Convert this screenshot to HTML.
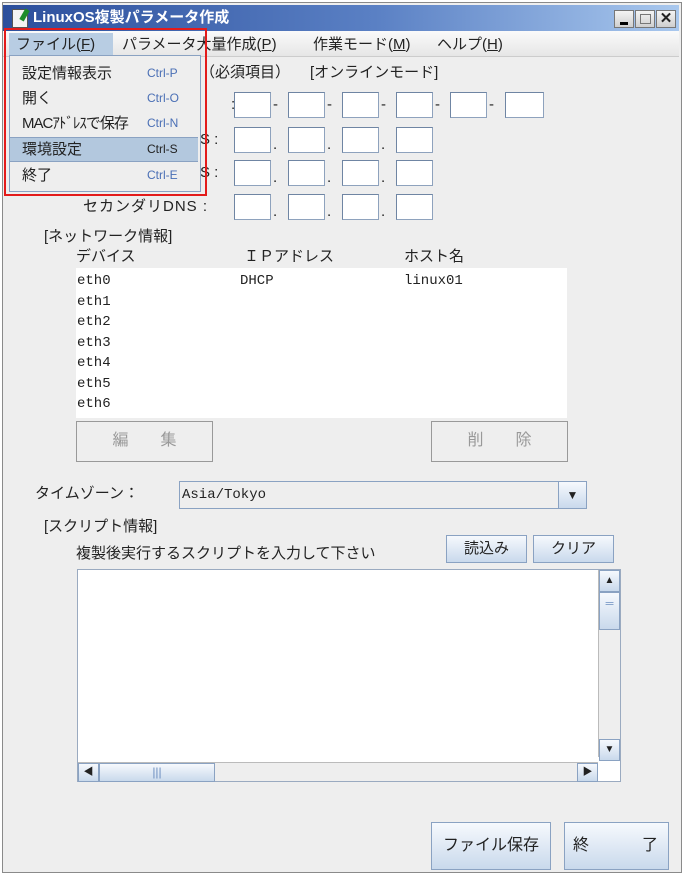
<!DOCTYPE html>
<html><head><meta charset="utf-8"><style>
*{box-sizing:border-box;margin:0;padding:0}
body{width:687px;height:876px;background:#fff;font-family:"Liberation Sans","Noto Sans CJK JP",sans-serif;font-size:15px;color:#222;position:relative;overflow:hidden}
.a{position:absolute;white-space:nowrap}
.win{position:absolute;left:2px;top:2px;width:680px;height:871px;background:#eeeeee;border:1px solid #8a8a8a}
.title{position:absolute;left:3px;top:5px;width:676px;height:26px;background:linear-gradient(90deg,#2c4f9c 0%,#5a80c4 55%,#a9c8ee 100%)}
.menu{position:absolute;left:3px;top:31px;width:676px;height:26px;background:linear-gradient(#fafafa,#e6e6e6);border-bottom:1px solid #ccc}
.tb{position:absolute;width:20px;height:18px;background:linear-gradient(#f4f4f4,#cfcfcf);border:1px solid #777;top:10px}
.box{position:absolute;width:37px;height:26px;background:#fff;border:1px solid #8ea2bd;border-left-color:#6f85a3;border-top-color:#6f85a3}
.btn{position:absolute;background:linear-gradient(#f6f9fd,#c9d9ec);border:1px solid #8aa2c2;text-align:center}
.dbtn{position:absolute;background:#eee;border:1px solid #999;color:#999;text-align:center;font-size:16px;line-height:38px}
.mi{position:absolute;left:10px;width:188px;height:25px;font-size:15px;line-height:25px;padding-left:12px}
.mi span{position:absolute;left:137px;font-size:12px;color:#4a6fb5}
.mono{font-family:"Liberation Mono",monospace;font-size:14px}
</style></head><body>
<div class="win"></div>
<div class="title"></div>
<div class="a" style="left:12px;top:9px;width:16px;height:19px;background:#f3f3f3;border:1px solid #555"></div>
<div class="a" style="left:22px;top:9px;width:5px;height:12px;background:#1c8d2a;transform:rotate(30deg)"></div>
<div class="a" style="left:33px;top:7px;color:#fff;font-weight:bold;font-size:15px;line-height:22px">LinuxOS複製パラメータ作成</div>
<div class="tb" style="left:614px"><div class="a" style="left:5px;top:11px;width:8px;height:3px;background:#000"></div></div>
<div class="tb" style="left:635px"><div class="a" style="left:4px;top:3px;width:11px;height:10px;border:1px solid #777"></div></div>
<div class="tb" style="left:656px;font-weight:bold;text-align:center;line-height:16px;font-size:15px">✕</div>
<div class="menu"></div>
<div class="a" style="left:9px;top:33px;width:104px;height:23px;background:#b8cde3"></div>
<div class="a" style="left:16px;top:34px;line-height:22px">ファイル(<u>F</u>)</div>
<div class="a" style="left:122px;top:34px;line-height:22px">パラメータ大量作成(<u>P</u>)</div>
<div class="a" style="left:313px;top:34px;line-height:22px">作業モード(<u>M</u>)</div>
<div class="a" style="left:437px;top:34px;line-height:22px">ヘルプ(<u>H</u>)</div>

<div class="a" style="left:200px;top:62px;line-height:22px">（必須項目）</div>
<div class="a" style="left:310px;top:62px;line-height:22px">[オンラインモード]</div>

<div class="a" style="left:231px;top:92px;line-height:26px">:</div>
<div class="box" style="left:234px;top:92px"></div><div class="a" style="left:273px;top:96px">-</div>
<div class="box" style="left:288px;top:92px"></div><div class="a" style="left:327px;top:96px">-</div>
<div class="box" style="left:342px;top:92px"></div><div class="a" style="left:381px;top:96px">-</div>
<div class="box" style="left:396px;top:92px"></div><div class="a" style="left:435px;top:96px">-</div>
<div class="box" style="left:450px;top:92px"></div><div class="a" style="left:489px;top:96px">-</div>
<div class="box" style="left:505px;top:92px;width:39px"></div>

<div class="a" style="left:200px;top:127px;line-height:26px">S :</div>
<div class="box" style="left:234px;top:127px"></div><div class="box" style="left:288px;top:127px"></div><div class="box" style="left:342px;top:127px"></div><div class="box" style="left:396px;top:127px"></div>
<div class="a" style="left:273px;top:136px">.</div><div class="a" style="left:327px;top:136px">.</div><div class="a" style="left:381px;top:136px">.</div>
<div class="a" style="left:200px;top:160px;line-height:26px">S :</div>
<div class="box" style="left:234px;top:160px"></div><div class="box" style="left:288px;top:160px"></div><div class="box" style="left:342px;top:160px"></div><div class="box" style="left:396px;top:160px"></div>
<div class="a" style="left:273px;top:169px">.</div><div class="a" style="left:327px;top:169px">.</div><div class="a" style="left:381px;top:169px">.</div>
<div class="a" style="left:83px;top:194px;line-height:26px;letter-spacing:1px">セカンダリDNS :</div>
<div class="box" style="left:234px;top:194px"></div><div class="box" style="left:288px;top:194px"></div><div class="box" style="left:342px;top:194px"></div><div class="box" style="left:396px;top:194px"></div>
<div class="a" style="left:273px;top:203px">.</div><div class="a" style="left:327px;top:203px">.</div><div class="a" style="left:381px;top:203px">.</div>

<div class="a" style="left:44px;top:226px;line-height:22px">[ネットワーク情報]</div>
<div class="a" style="left:76px;top:246px;line-height:22px">デバイス</div>
<div class="a" style="left:244px;top:246px;line-height:22px">ＩＰアドレス</div>
<div class="a" style="left:404px;top:246px;line-height:22px">ホスト名</div>
<div class="a" style="left:76px;top:268px;width:491px;height:150px;background:#fff"></div>
<div class="a mono" style="left:77px;top:271px;line-height:20.5px">eth0<br>eth1<br>eth2<br>eth3<br>eth4<br>eth5<br>eth6</div>
<div class="a mono" style="left:240px;top:271px;line-height:20.5px">DHCP</div>
<div class="a mono" style="left:404px;top:271px;line-height:20.5px">linux01</div>
<div class="dbtn" style="left:76px;top:421px;width:137px;height:41px">編　　集</div>
<div class="dbtn" style="left:431px;top:421px;width:137px;height:41px">削　　除</div>

<div class="a" style="left:35px;top:483px;line-height:22px">タイムゾーン：</div>
<div class="a" style="left:179px;top:481px;width:408px;height:28px;background:#eee;border:1px solid #8aa2c2"></div>
<div class="a mono" style="left:182px;top:485px;line-height:20px">Asia/Tokyo</div>
<div class="btn" style="left:558px;top:481px;width:29px;height:28px;font-size:12px;line-height:26px">▼</div>

<div class="a" style="left:44px;top:516px;line-height:22px">[スクリプト情報]</div>
<div class="a" style="left:76px;top:543px;line-height:22px">複製後実行するスクリプトを入力して下さい</div>
<div class="btn" style="left:446px;top:535px;width:81px;height:28px;line-height:26px">読込み</div>
<div class="btn" style="left:533px;top:535px;width:81px;height:28px;line-height:26px">クリア</div>

<div class="a" style="left:77px;top:569px;width:544px;height:213px;background:#fff;border:1px solid #9aaac0"></div>
<div class="a" style="left:598px;top:570px;width:22px;height:187px;background:#eee;border-left:1px solid #bbb"></div>
<div class="btn" style="left:599px;top:570px;width:21px;height:22px;font-size:10px;line-height:20px">▲</div>
<div class="btn" style="left:599px;top:592px;width:21px;height:38px;color:#6d8fc0;font-size:11px;line-height:14px;padding-top:4px">═</div>
<div class="btn" style="left:599px;top:739px;width:21px;height:22px;font-size:10px;line-height:20px">▼</div>
<div class="a" style="left:78px;top:762px;width:520px;height:19px;background:#eee;border-top:1px solid #bbb"></div>
<div class="btn" style="left:78px;top:763px;width:21px;height:19px;font-size:10px;line-height:17px">◀</div>
<div class="btn" style="left:99px;top:763px;width:116px;height:19px;color:#6d8fc0;font-size:12px;line-height:16px">|||</div>
<div class="btn" style="left:577px;top:763px;width:21px;height:19px;font-size:10px;line-height:17px">▶</div>

<div class="btn" style="left:431px;top:822px;width:120px;height:48px;line-height:46px;font-size:16px">ファイル保存</div>
<div class="btn" style="left:564px;top:822px;width:105px;height:48px;line-height:46px;font-size:16px;text-align:left;padding-left:8px">終<span style="position:absolute;right:10px">了</span></div>

<div class="a" style="left:9px;top:55px;width:192px;height:137px;background:#eeeeee;border:1px solid #8aa2c2"></div>
<div class="mi" style="top:61px">設定情報表示<span>Ctrl-P</span></div>
<div class="mi" style="top:86px">開く<span>Ctrl-O</span></div>
<div class="mi" style="top:111px;letter-spacing:-1px">MACｱﾄﾞﾚｽで保存<span style="letter-spacing:0">Ctrl-N</span></div>
<div class="mi" style="top:137px;background:#b3c8de;border-top:1px solid #8aa2c2;border-bottom:1px solid #8aa2c2;line-height:23px">環境設定<span style="color:#222">Ctrl-S</span></div>
<div class="mi" style="top:163px">終了<span>Ctrl-E</span></div>
<div class="a" style="left:4px;top:28px;width:203px;height:168px;border:2px solid #e31b1b"></div>
</body></html>
